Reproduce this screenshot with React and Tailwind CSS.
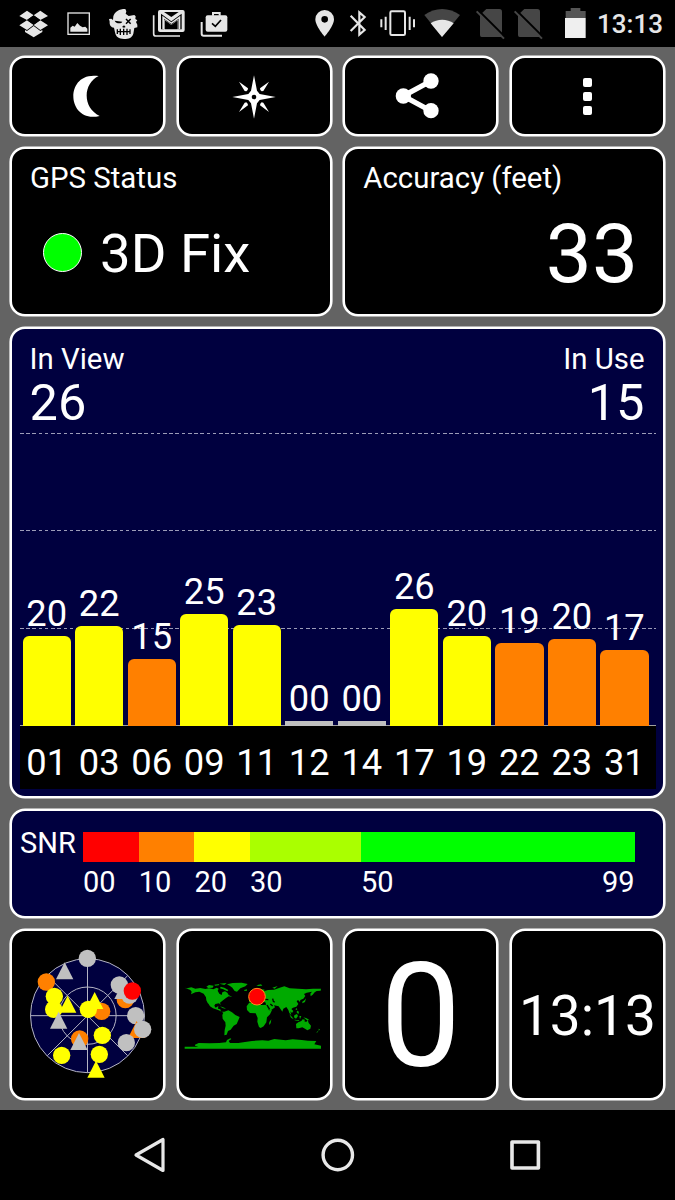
import clsx from "clsx";

const SATELLITES = [
  { id: "01", snr: "20", height: 90, tone: "yellow" },
  { id: "03", snr: "22", height: 100, tone: "yellow" },
  { id: "06", snr: "15", height: 67, tone: "orange" },
  { id: "09", snr: "25", height: 112, tone: "yellow" },
  { id: "11", snr: "23", height: 101.5, tone: "yellow" },
  { id: "12", snr: "00", height: 5, tone: "gray" },
  { id: "14", snr: "00", height: 5, tone: "gray" },
  { id: "17", snr: "26", height: 117, tone: "yellow" },
  { id: "19", snr: "20", height: 90.5, tone: "yellow" },
  { id: "22", snr: "19", height: 83.5, tone: "orange" },
  { id: "23", snr: "20", height: 87, tone: "orange" },
  { id: "31", snr: "17", height: 76, tone: "orange" },
];

const TONES = {
  yellow: "bg-[#ffff00] rounded-t-[6px]",
  orange: "bg-[#ff8000] rounded-t-[6px]",
  gray: "bg-[#c0c0c0]",
};

const SNR_SCALE = [
  { label: "00", cls: "w-[55.7px]", fill: "bg-[#ff0000]" },
  { label: "10", cls: "w-[55.7px]", fill: "bg-[#ff8000]" },
  { label: "20", cls: "w-[55.6px]", fill: "bg-[#ffff00]" },
  { label: "30", cls: "w-[111px]", fill: "bg-[#aaff00]" },
  { label: "50", cls: "flex-1", fill: "bg-[#00ff00]" },
];

// Sky plot markers, drawn in order so that later ones overlap earlier ones
const SKY = [
  ["c", 262, 113, "#c0c0c0"],
  ["t", 194, 151, "#c0c0c0"],
  ["c", 139, 184, "#ff8000"],
  ["c", 161, 266, "#ffff00"],
  ["c", 163, 227, "#ffff00"],
  ["t", 203, 251, "#ffff00"],
  ["t", 176, 299, "#c0c0c0"],
  ["c", 305, 272, "#ff8000"],
  ["c", 265, 266, "#ffff00"],
  ["t", 284, 240, "#ffff00"],
  ["c", 376, 237, "#ff8000"],
  ["c", 358, 193, "#c0c0c0"],
  ["t", 369, 210, "#c0c0c0"],
  ["c", 389, 223, "#c0c0c0"],
  ["c", 397, 211, "#ff0000"],
  ["c", 407, 285, "#c0c0c0"],
  ["t", 410, 327, "#ff8000"],
  ["c", 428, 326, "#c0c0c0"],
  ["c", 379, 366, "#c0c0c0"],
  ["c", 239, 355, "#ff8000"],
  ["t", 237, 363, "#c0c0c0"],
  ["c", 307, 344, "#ffff00"],
  ["c", 298, 401, "#ffff00"],
  ["c", 185, 404, "#ffff00"],
  ["t", 288, 446, "#ffff00"],
];

function Panel({ className, children }) {
  return (
    <div className={clsx("m-px rounded-[15px] border-2 border-white shadow-[0_0_0_0.6px_#ffffff]", className)}>
      {children}
    </div>
  );
}

function StatusBar() {
  return (
    <header className="flex h-[47px] items-center bg-black text-[#e6e6e6]">
      <svg viewBox="54 0 93 141" className="ml-[18px] h-[47px] w-[31px]" fill="currentColor">
        <path d="M81 32 101 46 81 60 58 48ZM121 32 144 48 121 60 101 46ZM81 61 101 75 81 90 58 76ZM121 61 144 76 121 90 101 75ZM101 78 121 93 127 90V96L101 112 75 96V90L81 93Z" />
        <path d="M81 60 101 46 121 60 101 74Z" fill="#000" />
      </svg>
      <svg viewBox="198 0 75 141" className="ml-[17px] h-[47px] w-[25px]">
        <rect x="204" y="39" width="64" height="64" fill="none" stroke="currentColor" strokeWidth="4" />
        <path d="M211 95V83L218 77 224 80 232 69 240 77 248 82 256 80 262 86V95Z" fill="currentColor" />
      </svg>
      <svg viewBox="324 0 93 141" className="ml-[17px] h-[47px] w-[31px]">
        <path d="M340 49C344 35 357 27 376 27L379 34 377 41 386 48 403 45 407 49 406 57 412 61 408 66 412 74 412 82 403 84 400 101C396 113 387 117 372 117 356 117 348 111 345 97L342 83C333 82 328 75 329 65L327 57 334 56 339 60Z" fill="currentColor" />
        <path d="M344 62 367 65C364 72 348 72 344 62ZM366 81 372 76 377 81 372 83Z" fill="#000" />
        <path d="M352 88V102M361 86V105M371 86V105M381 86V105M390 88V102M350 95H392" fill="none" stroke="#000" strokeWidth="4" />
        <path d="M378 57 392 71M392 57 378 71" stroke="#000" strokeWidth="4.5" />
      </svg>
      <svg viewBox="456 0 102 141" className="ml-[13px] h-[47px] w-[34px]" fill="none">
        <path d="M461 46V101Q461 108 468 108H540" stroke="currentColor" strokeWidth="5" />
        <rect x="474" y="30" width="80" height="66" rx="6" fill="currentColor" />
        <path d="M492 36H536L514 51Z" fill="#000" />
        <path d="M483 41 514 64 545 41V88H535V58L514 74 493 58V88H483Z" fill="#000" />
        <path d="M487 88V47L514 67 541 47V88H536V56L514 72 492 56V88Z" fill="currentColor" />
        <path d="M495 88V61L514 75 533 61V88Z" fill="#000" />
      </svg>
      <svg viewBox="597 0 90 141" className="ml-[13px] h-[47px] w-[30px]" fill="none">
        <path d="M605 66V101Q605 107 611 107H666" stroke="currentColor" strokeWidth="6" />
        <rect x="617" y="46" width="65" height="49" rx="6" fill="currentColor" />
        <path d="M639 47V39H659V47" stroke="currentColor" strokeWidth="6" />
        <path d="M636 70 646 79 663 60" stroke="#000" strokeWidth="5" />
      </svg>

      <svg viewBox="42 0 63 141" className="ml-[85px] h-[47px] w-[21px]" fill="currentColor">
        <path fillRule="evenodd" d="M74 30A28 28 0 0 0 46 58C46 78 74 110 74 110S102 78 102 58A28 28 0 0 0 74 30ZM74 48A10 10 0 1 1 74 68 10 10 0 0 1 74 48Z" />
      </svg>
      <svg viewBox="144 0 60 141" className="ml-[13px] h-[47px] w-[20px]" fill="none" stroke="currentColor" strokeWidth="6.5">
        <path d="M152 47 194 90 178 104V37L194 51 152 93" />
      </svg>
      <svg viewBox="237 0 111 141" className="ml-[11px] h-[47px] w-[37px]" fill="none" stroke="currentColor" strokeWidth="6">
        <rect x="271" y="34" width="44" height="71" rx="4" />
        <path d="M244 58V82M257 50V90M329 50V90M342 58V82" />
      </svg>
      <svg viewBox="369 0 114 141" className="ml-[7px] h-[47px] w-[38px]">
        <path d="M426 111 373 45C405 21 448 21 480 45Z" fill="#464646" />
        <path d="M426 111 392 70C411 56 442 56 461 70Z" fill="currentColor" />
      </svg>
      <NoSim className="ml-[14px]" />
      <NoSim className="ml-[8px]" />
      <svg viewBox="792 0 69 141" className="ml-[21px] h-[47px] w-[23px]">
        <path d="M797 54V33H812V24H841V33H857V54Z" fill="#555" />
        <path d="M795 54H857V114H795Z" fill="#efefef" />
      </svg>
      <span className="ml-[10px] text-[26px] leading-[50px] font-medium">13:13</span>
    </header>
  );
}

function NoSim({ className }) {
  return (
    <svg viewBox="525 0 90 141" className={clsx("h-[47px] w-[30px]", className)}>
      <path d="M540 45 559 27H598Q606 27 606 35V111H545Q540 111 540 105Z" fill="#464646" />
      <path d="M534 30 616 112" stroke="#000" strokeWidth="6" />
      <path d="M530 34 612 116" stroke="#464646" strokeWidth="6" />
    </svg>
  );
}

function Toolbar() {
  return (
    <div className="grid h-[82px] grid-cols-4 gap-[9.5px]">
      <Panel className="flex items-center justify-center bg-black">
        <svg viewBox="216 222 88 134" className="mr-[2px] h-[44.67px] w-[29.33px]">
          <path d="M296 228C240 220 220 258 220 289 220 323 246 361 299 348 246 323 249 250 296 228Z" fill="#fff" />
        </svg>
      </Panel>
      <Panel className="flex items-center justify-center bg-black">
        <svg viewBox="695 223 132 132" className="mt-px size-[44px]" fill="#fff">
          <path d="M761 224 770 270 778 280 826 289 778 298 770 308 761 354 752 308 744 298 696 289 744 280 752 270Z" />
          <path d="M716 243 743 263 742 268 738 272 733 271ZM806 243 779 263 780 268 784 272 789 271ZM716 334 743 314 742 309 738 305 733 306ZM806 334 779 314 780 309 784 305 789 306Z" />
          <circle cx="761" cy="289" r="7" fill="#000" />
        </svg>
      </Panel>
      <Panel className="flex items-center justify-center bg-black">
        <svg viewBox="286 220 132 138" className="mr-[7px] h-[46px] w-[44px]" fill="#fff">
          <path d="M394 244 311 289 394 334" fill="none" stroke="#fff" strokeWidth="16" />
          <circle cx="311" cy="289" r="23" />
          <circle cx="394" cy="244" r="23" />
          <circle cx="394" cy="333" r="23" />
        </svg>
      </Panel>
      <Panel className="flex flex-col items-center justify-center gap-[4.5px] bg-black pt-px">
        <span className="size-[9.5px] rounded-[2px] bg-white" />
        <span className="size-[9.5px] rounded-[2px] bg-white" />
        <span className="size-[9.5px] rounded-[2px] bg-white" />
      </Panel>
    </div>
  );
}

function SignalChart() {
  return (
    <Panel className="h-[471px] bg-[#00003f] px-[7.5px] pt-[13px]">
      <div className="flex justify-between pr-[11px] pl-[10px]">
        <div>
          <p className="text-[29.4px] leading-[34px]">In View</p>
          <p className="mt-[2px] text-[50.5px] leading-[50px]">26</p>
        </div>
        <div className="text-right">
          <p className="text-[29.4px] leading-[34px]">In Use</p>
          <p className="mt-[2px] text-[50.5px] leading-[50px]">15</p>
        </div>
      </div>

      <div className="relative mt-[5px] h-[293px]">
        <div className="absolute inset-0 flex flex-col border-b border-[#a0a0a0]">
          {[0, 1, 2].map((line) => (
            <div key={line} className="flex-1">
              <div className="h-px bg-[repeating-linear-gradient(90deg,#9c9cb8_0_3.6px,transparent_3.6px_6.22px)]" />
            </div>
          ))}
        </div>
        <div className="relative flex h-full items-end gap-[4.15px] pr-[7px] pl-[3px]">
          {SATELLITES.map((sat) => (
            <div key={sat.id} className="flex-1 text-center">
              <p className="mb-[4px] text-[36.3px] leading-[36px]">{sat.snr}</p>
              <div className={TONES[sat.tone]} style={{ height: sat.height }} />
            </div>
          ))}
        </div>
      </div>
      <div className="flex h-[62.5px] gap-[4.15px] bg-black pt-[14px] pr-[7px] pl-[3px]">
        {SATELLITES.map((sat) => (
          <span key={sat.id} className="flex-1 text-center text-[36.3px] leading-[45px]">
            {sat.id}
          </span>
        ))}
      </div>
    </Panel>
  );
}

function SnrLegend() {
  return (
    <Panel className="flex h-[109px] bg-[#00003f] pt-[21px] pr-[28.5px] pl-[8px] text-[29px]">
      <span className="w-[63px] leading-[22px]">SNR</span>
      <div className="flex flex-1">
        {SNR_SCALE.map((step) => (
          <div key={step.label} className={step.cls}>
            <div className={clsx("h-[30px]", step.fill)} />
            <div className="flex justify-between leading-[40px]">
              <span>{step.label}</span>
              {step.label === "50" && <span>99</span>}
            </div>
          </div>
        ))}
      </div>
    </Panel>
  );
}

function SkyPlot() {
  return (
    <svg viewBox="75 82 375 405" className="mt-px h-[135px] w-[125px] overflow-visible">
      <circle cx="262.5" cy="285" r="171" fill="#00003f" />
      <g fill="none" stroke="#b4b4c4" strokeWidth="3">
        <circle cx="262.5" cy="285" r="171" />
        <circle cx="262.5" cy="285" r="86" />
        <path d="M91 285H434M262.5 114V456M142 165 383 405M383 165 142 405" />
      </g>
      {SKY.map(([kind, x, y, fill], i) =>
        kind === "c" ? (
          <circle key={i} cx={x} cy={y} r="26" fill={fill} />
        ) : (
          <path key={i} d={`M${x} ${y - 26}L${x + 26} ${y + 25}H${x - 26}Z`} fill={fill} />
        )
      )}
    </svg>
  );
}

function WorldMap() {
  return (
    <svg viewBox="45 37 411 204" className="mt-[3px] mr-[3px] h-[68px] w-[137px]">
      <g fill="#00aa00">
        {/* Americas */}
        <path d="M47 54 54 56 67 53 79 57 94 55 109 58 120 56 133 59 143 54 149 57 146 63 151 72 158 76 160 68 168 65 175 69 179 76 190 82 179 80 171 85 163 91 153 99 155 106 150 101 139 103 136 108 140 114 148 109 147 117 154 119 156 126 166 126 178 122 189 128 199 136 212 142 208 152 203 163 194 168 185 180 177 184 173 195 166 197 167 181 170 168 169 158 161 147 160 136 163 129 149 122 132 116 123 110 119 103 116 100 112 92 111 83 104 72 91 66 79 68 66 74 68 66 64 61Z" />
        <path d="M112 51 120 46 134 48 131 54 118 55ZM136 45 151 43 149 47 138 48ZM155 51 166 54 178 61 175 65 163 59 153 56ZM151 42 173 40 166 46ZM174 44 191 40 218 39 236 43 229 50 214 56 204 66 197 64 190 54 183 49ZM153 110 166 114 171 118 160 115ZM225 61 234 59 234 63 227 64Z" />
        {/* Africa */}
        <path d="M240 100 252 99 266 98 268 103 278 106 292 105 300 122 309 121 303 134 294 143 292 158 284 170 275 175 270 172 265 156 266 145 260 131 243 130 234 121 233 110ZM301 157 307 149 305 161 300 166Z" />
        {/* Europe and Asia */}
        <path d="M240 98 240 90 249 89 255 83 261 69 273 57 287 60 284 65 297 61 315 60 330 55 346 50 362 56 387 57 411 59 432 57 456 57 455 63 443 64 437 68 431 75 425 80 424 72 429 66 413 69 405 73 409 79 403 87 394 91 393 97 387 91 383 95 388 103 382 111 372 114 367 118 373 124 369 130 364 125 367 137 361 130 358 121 352 112 343 117 340 126 334 117 329 110 315 107 318 113 308 120 301 122 292 107 289 98 275 96 267 91 254 92 249 98Z" />
        <path d="M262 47 276 44 280 48 268 49ZM310 54 326 49 317 57ZM243 72 249 75 253 82 244 83ZM400 96 407 91 411 86 408 97 400 101ZM379 119 383 115 385 122ZM361 134 370 143 374 149 366 144ZM376 137 384 133 387 139 381 147 375 143ZM376 150 391 152 389 154 377 152ZM391 139 397 139 393 149ZM384 123 390 126 388 134 383 128ZM403 143 413 146 422 152 413 151Z" />
        {/* Oceania and Antarctica */}
        <path d="M381 163 388 158 397 154 401 149 408 150 406 155 412 157 416 150 419 160 426 168 424 177 415 182 408 177 400 173 389 176 382 176ZM449 177 453 179 449 184ZM445 185 448 186 442 190ZM47 231H456V237H47ZM78 225 89 220 122 221 151 220 171 218 174 211 184 206 187 208 179 214 183 220 208 220 228 217 249 214 280 212 298 213 316 208 350 212 371 209 398 211 417 213 442 214 436 224 456 228V232H91L78 228Z" />
      </g>
      <path d="M288 89 298 90M311 87 313 95 317 98M294 106 302 119M304 103 311 109" fill="none" stroke="#000" strokeWidth="4" />
      <circle cx="264" cy="81" r="25" fill="#ff0000" stroke="#ff8c1a" strokeWidth="3" />
    </svg>
  );
}

function NavBar() {
  return (
    <nav className="flex h-[90px] items-center justify-center gap-[147px] bg-black text-[#e8e8e8]">
      <svg viewBox="0 0 40 40" className="size-10" fill="none" stroke="currentColor" strokeWidth="3.2" strokeLinejoin="round">
        <path d="M5 20 32 4.5V35.5Z" />
      </svg>
      <svg viewBox="0 0 40 40" className="size-10" fill="none" stroke="currentColor" strokeWidth="3.4">
        <circle cx="19.8" cy="20" r="14.7" />
      </svg>
      <svg viewBox="0 0 40 40" className="size-10" fill="none" stroke="currentColor" strokeWidth="3.6" strokeLinejoin="round">
        <path d="M7 7H33.4V33H7Z" />
      </svg>
    </nav>
  );
}

export default function App() {
  return (
    <div className="h-[1200px] w-[675px] overflow-hidden bg-[#636363] font-['Roboto',sans-serif] text-white">
      <StatusBar />
      <main className="flex h-[1063px] flex-col gap-[9px] px-[9px] pt-[8px]">
        <Toolbar />

        <div className="grid h-[171px] grid-cols-2 gap-[9.5px]">
          <Panel className="bg-black px-[18px] pt-[12px]">
            <p className="text-[29.4px] leading-[34px]">GPS Status</p>
            <div className="flex h-[115px] items-center pl-[13px]">
              <span className="mr-[18px] size-[39px] rounded-full border border-white bg-[#00ff00]" />
              <span className="text-[54.5px] leading-[56px]">3D Fix</span>
            </div>
          </Panel>
          <Panel className="bg-black pt-[12px] pr-[25px] pl-[18px]">
            <p className="text-[29.4px] leading-[34px]">Accuracy (feet)</p>
            <p className="text-right text-[82px] leading-[119px]">33</p>
          </Panel>
        </div>

        <SignalChart />
        <SnrLegend />

        <div className="grid h-[173px] grid-cols-4 gap-[9.5px]">
          <Panel className="flex items-center justify-center bg-black">
            <SkyPlot />
          </Panel>
          <Panel className="flex items-center justify-center bg-black">
            <WorldMap />
          </Panel>
          <Panel className="flex items-center justify-center bg-black">
            <span className="mt-[5px] text-[144px] leading-none">0</span>
          </Panel>
          <Panel className="flex items-center justify-center bg-black">
            <span className="mt-[4px] text-[55px] leading-none">13:13</span>
          </Panel>
        </div>
      </main>
      <NavBar />
    </div>
  );
}
